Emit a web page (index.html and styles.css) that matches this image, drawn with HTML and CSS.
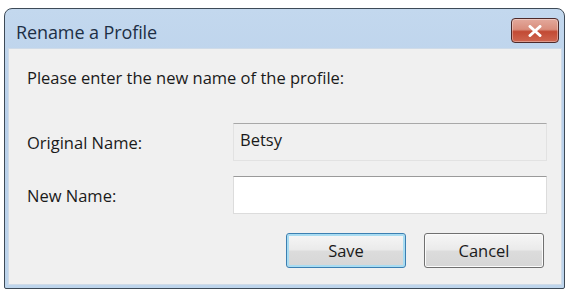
FILE: index.html
```html
<!DOCTYPE html>
<html>
<head>
<meta charset="utf-8">
<link rel="stylesheet" href="styles.css">
</head>
<body>
<div class="window">
  <div class="titlebar">
    <span class="title">Rename a Profile</span>
    <button class="close" aria-label="Close">
      <svg width="14" height="12" viewBox="0 0 14 12">
        <path d="M2 1.5 L12 10.5 M12 1.5 L2 10.5" stroke="#fff" stroke-width="3" stroke-linecap="round"/>
      </svg>
    </button>
  </div>
  <div class="frame">
    <div class="content">
      <p class="prompt">Please enter the new name of the profile:</p>
      <div class="row row-first">
        <span class="label">Original Name:</span>
        <div class="field readonly">Betsy</div>
      </div>
      <div class="row">
        <span class="label">New Name:</span>
        <div class="field"></div>
      </div>
      <div class="buttons">
        <button class="btn btn-default">Save</button>
        <button class="btn">Cancel</button>
      </div>
    </div>
  </div>
</div>
</body>
</html>
```

FILE: styles.css
```css
html, body {
  margin: 0;
  padding: 0;
  background: #ffffff;
}
body {
  padding: 8px 5px 0 4px;
  font-family: "Open Sans", "Liberation Sans", sans-serif;
  color: #1a1a1a;
}
.window {
  width: 561px;
  height: 281px;
  border: 1px solid #3d4a57;
  border-radius: 8px 8px 2px 2px;
  background: linear-gradient(to bottom, #c3d8ee 0%, #b9d0ea 40%, #bed5ec 100%);
  display: flex;
  flex-direction: column;
  box-sizing: border-box;
}
.titlebar {
  height: 39px;
  display: flex;
  align-items: flex-start;
  justify-content: space-between;
  padding: 0 5px 0 11px;
  box-sizing: border-box;
}
.title {
  font-size: 18px;
  line-height: 24px;
  color: #1d2f45;
  margin-top: 11px;
  letter-spacing: -0.1px;
}
.close {
  margin-top: 9px;
  width: 48px;
  height: 25px;
  border: 1px solid #4d2a2a;
  border-radius: 4px;
  background: linear-gradient(to bottom, #e3a99c 0%, #d98d7c 45%, #c24a34 55%, #cf6650 100%);
  box-shadow: inset 0 0 0 1px rgba(255,255,255,0.35);
  display: flex;
  align-items: center;
  justify-content: center;
  padding: 0;
}
.frame {
  flex: 1;
  padding: 0 3px 3px 3px;
  display: flex;
}
.content {
  flex: 1;
  background: #f0f0f0;
  border: 1px solid #cfdbe8;
  padding: 0 14px 0 18px;
  box-sizing: border-box;
}
.prompt {
  margin: 18px 0 0 0;
  font-size: 16.5px;
  line-height: 22px;
}
.row {
  display: flex;
  align-items: center;
  margin-top: 15px;
}
.row-first {
  margin-top: 34px;
}
.label {
  width: 206px;
  font-size: 16.5px;
}
.field {
  width: 314px;
  height: 38px;
  box-sizing: border-box;
  background: #ffffff;
  border: 1px solid #dcdcdc;
  border-top-color: #9a9a9a;
  font-size: 16.5px;
  line-height: 32px;
  padding-left: 6px;
}
.field.readonly {
  background: #f0f0f0;
  border-color: #e2e2e2;
  border-top-color: #a8a8a8;
}
.buttons {
  display: flex;
  justify-content: flex-end;
  gap: 18px;
  margin-top: 19px;
  padding-right: 3px;
}
.btn {
  width: 120px;
  height: 35px;
  border: 1px solid #707070;
  border-radius: 3px;
  background: linear-gradient(to bottom, #f6f6f6 0%, #eaeaea 48%, #dcdcdc 52%, #d6d6d6 100%);
  box-shadow: inset 0 0 0 1px #fbfbfb;
  font-family: "Open Sans", "Liberation Sans", sans-serif;
  font-size: 16.5px;
  color: #1a1a1a;
  padding: 0;
}
.btn-default {
  border-color: #3c7fb1;
  box-shadow: inset 0 0 0 2px #a8dcf2;
}
```
